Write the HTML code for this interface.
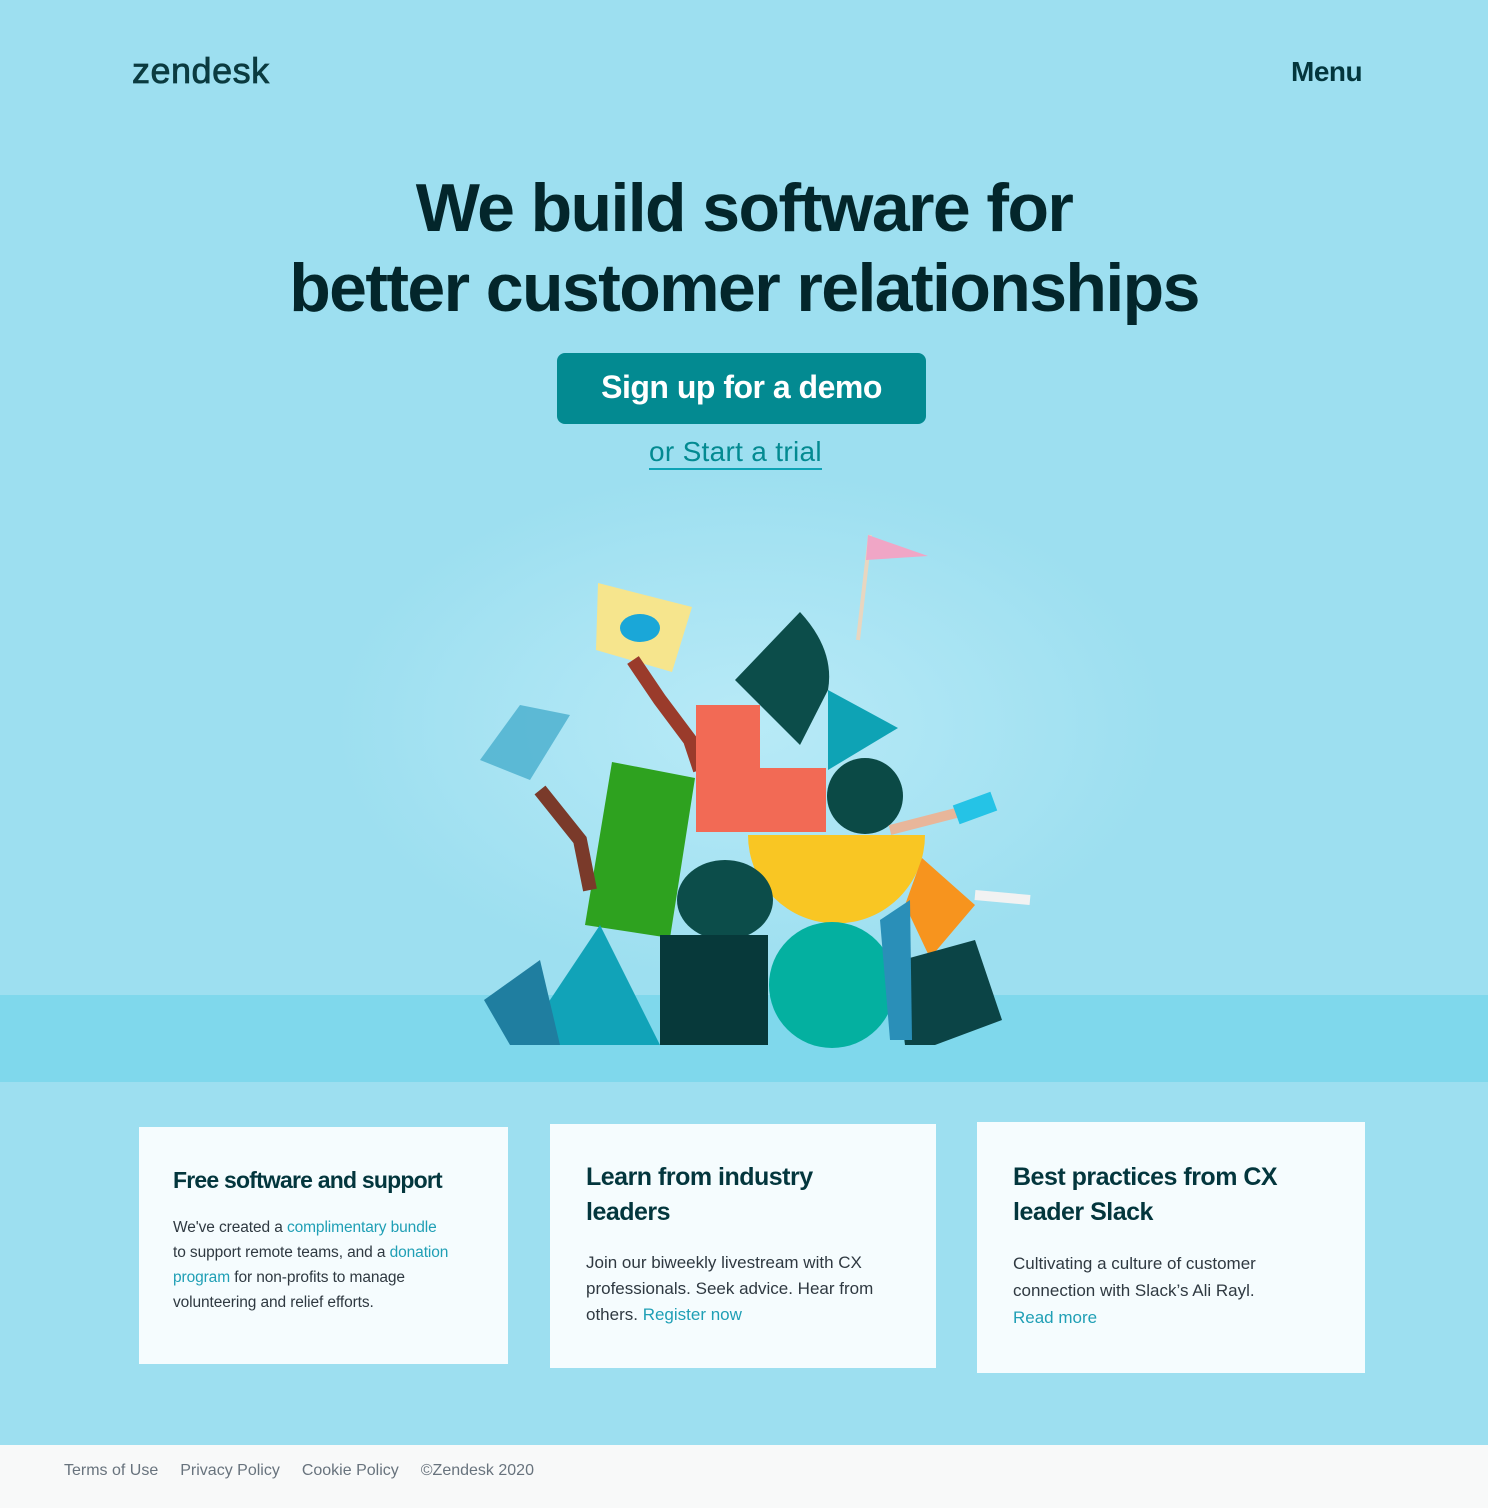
<!DOCTYPE html>
<html><head><meta charset="utf-8">
<style>
*{margin:0;padding:0;box-sizing:border-box}
body{width:1488px;height:1508px;background:#9ddff0;font-family:"Liberation Sans",sans-serif;position:relative;overflow:hidden;color:#03363d}
.abs{position:absolute}
.logo{left:132px;top:50px;font-size:36px;letter-spacing:0.5px;color:#0b3b40;-webkit-text-stroke:0.8px #0b3b40}
.menu{left:1291px;top:56px;font-size:28px;font-weight:bold;letter-spacing:-0.5px;color:#03363d}
h1{position:absolute;left:0;width:1488px;top:168px;text-align:center;font-size:68px;line-height:80px;font-weight:bold;letter-spacing:-1.6px;color:#03262b}
.btn{left:557px;top:353px;width:369px;height:71px;background:#038a91;border-radius:8px;color:#fff;font-size:32px;font-weight:bold;text-align:center;line-height:68px;letter-spacing:-0.5px}
.trial{left:649px;top:436px;font-size:28px;color:#038a91;border-bottom:2px solid #0ea3b5;line-height:32px;letter-spacing:0.3px}
.floor{left:0;top:995px;width:1488px;height:87px;background:#7fd8ec}
.glow{left:300px;top:450px;width:900px;height:550px;background:radial-gradient(ellipse at center,#b8eaf7 0%,rgba(157,223,240,0) 65%)}
.card{background:#f5fcfe;padding:0 36px}
.card h3{font-size:25px;line-height:35px;letter-spacing:-0.5px;color:#03363d;font-weight:bold}
.card p{font-size:16px;line-height:25px;color:#2f3941}
.card a{color:#1f9fb5;text-decoration:none}
.footer{left:0;top:1445px;width:1488px;height:63px;background:#f8f9f9;font-size:16px;color:#68737d;padding:17px 0 0 64px}
.footer span{margin-right:22px}
</style></head><body>
<div class="abs glow"></div>
<div class="abs floor"></div>
<div class="abs logo">zendesk</div>
<div class="abs menu">Menu</div>
<h1>We build software for<br>better customer relationships</h1>
<div class="abs btn">Sign up for a demo</div>
<div class="abs trial">or Start a trial</div>

<svg class="abs" style="left:440px;top:520px" width="620" height="540" viewBox="440 520 620 540">
<polygon points="480,760 520,705 570,715 530,780" fill="#3aa6c8" opacity=".7"/>
<polygon points="598,583 692,607 672,672 596,650" fill="#f6e58d"/>
<ellipse cx="640" cy="628" rx="20" ry="14" fill="#1aa7d8"/>
<line x1="858" y1="640" x2="870" y2="535" stroke="#e8d6c0" stroke-width="4"/>
<polygon points="868,535 928,556 866,560" fill="#f0a6c6"/>
<path d="M735,680 L800,612 Q835,650 828,690 L800,745 Z" fill="#0c4d4a"/>
<polygon points="828,690 898,728 828,770" fill="#0ea3b5"/>
<path d="M633,660 L660,700 L690,740 L700,770" stroke="#9a3b2b" stroke-width="14" fill="none"/>
<polygon points="696,705 760,705 760,768 826,768 826,832 696,832" fill="#f26a55"/>
<circle cx="865" cy="796" r="38" fill="#0b4a46"/>
<path d="M890,830 L960,812" stroke="#e8b69a" stroke-width="10"/>
<rect x="955" y="798" width="40" height="20" fill="#25c3e6" transform="rotate(-20 975 808)"/>
<polygon points="612,762 695,778 670,938 585,925" fill="#2ea21f"/>
<path d="M540,790 L580,840 L590,890" stroke="#7a3a2a" stroke-width="14" fill="none"/>
<path d="M748,835 L925,835 A88,88 0 0 1 748,835 Z" fill="#f9c623"/>
<polygon points="922,858 975,905 930,958 905,905" fill="#f7941e"/>
<path d="M975,895 L1030,900" stroke="#f2f2f2" stroke-width="10"/>
<ellipse cx="725" cy="900" rx="48" ry="40" fill="#0c4d4a"/>
<polygon points="520,1045 600,925 660,1045" fill="#11a3b8"/>
<polygon points="484,1000 540,960 560,1045 510,1045" fill="#1f7ea0"/>
<rect x="660" y="935" width="108" height="110" fill="#07393a"/>
<circle cx="832" cy="985" r="63" fill="#04b0a0"/>
<polygon points="895,962 975,940 1002,1020 935,1045 905,1045" fill="#0b4446"/>
<polygon points="880,920 910,900 912,1040 890,1040" fill="#2a8fb8"/>
</svg>

<div class="abs card" style="left:139px;top:1127px;width:369px;height:237px;padding:36px 30px 0 34px">
<h3 style="font-size:23px;letter-spacing:-0.8px;white-space:nowrap">Free software and support</h3>
<p style="margin-top:17px;font-size:15.5px;letter-spacing:-0.1px">We've created a <a>complimentary bundle</a><br>to support remote teams, and a <a>donation</a><br><a>program</a> for non-profits to manage<br>volunteering and relief efforts.</p>
</div>
<div class="abs card" style="left:550px;top:1124px;width:386px;height:244px;padding-top:36px">
<h3>Learn from industry<br>leaders</h3>
<p style="margin-top:20px;font-size:17px;line-height:26px">Join our biweekly livestream with CX professionals. Seek advice. Hear from others. <a>Register now</a></p>
</div>
<div class="abs card" style="left:977px;top:1122px;width:388px;height:251px;padding-top:38px">
<h3>Best practices from CX<br>leader Slack</h3>
<p style="margin-top:20px;font-size:17px;line-height:27px">Cultivating a culture of customer connection with Slack’s Ali Rayl.<br><a>Read more</a></p>
</div>

<div class="abs footer"><span>Terms of Use</span><span>Privacy Policy</span><span>Cookie Policy</span><span>©Zendesk 2020</span></div>
</body></html>
